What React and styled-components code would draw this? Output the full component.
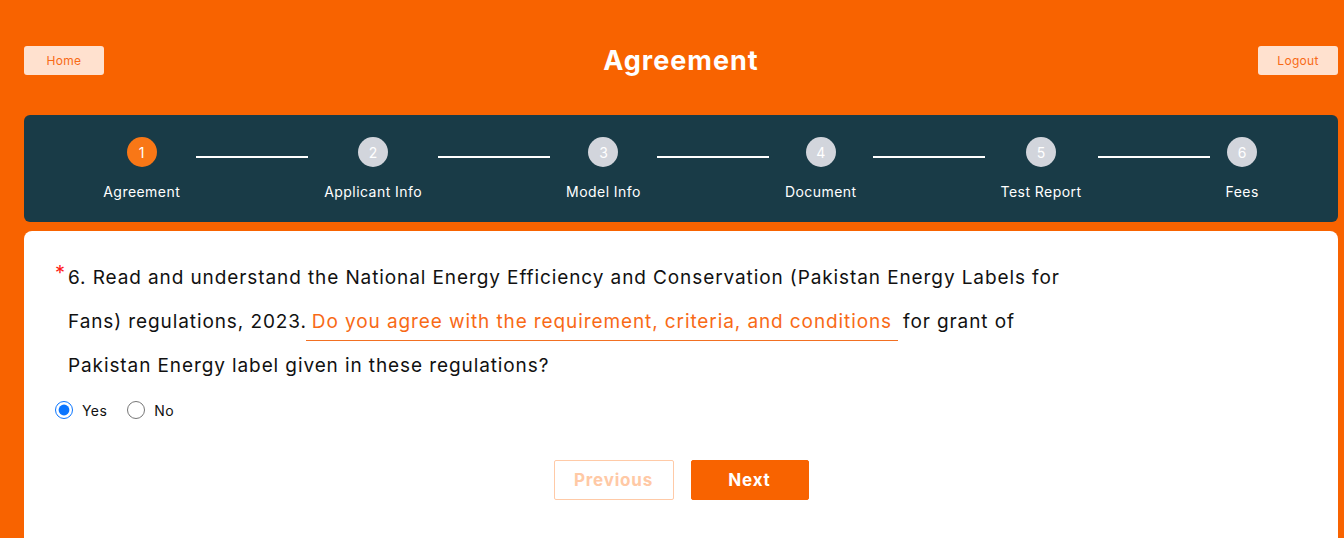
import React, { useState } from 'react';
import styled, { createGlobalStyle } from 'styled-components';

const GlobalStyle = createGlobalStyle`
  body {
    margin: 0;
    background: #f86300;
    font-family: Inter, "Open Sans", Arial, sans-serif;
  }
  * {
    box-sizing: border-box;
  }
`;

const Page = styled.div`
  padding: 0 6px 0 24px;
`;

const Header = styled.div`
  display: flex;
  align-items: center;
  justify-content: space-between;
  height: 115px;
  padding-top: 6px;
`;

const HeaderButton = styled.button`
  width: 80px;
  height: 29px;
  border: none;
  border-radius: 3px;
  background: #ffe1cf;
  color: #f86a16;
  font-family: inherit;
  font-size: 12px;
  letter-spacing: 0.3px;
  cursor: pointer;
`;

const Title = styled.h1`
  margin: 0;
  color: #ffffff;
  font-size: 27px;
  font-weight: 700;
  letter-spacing: 1px;
`;

const Stepper = styled.div`
  display: flex;
  justify-content: center;
  height: 107px;
  padding-top: 22px;
  border-radius: 6px;
  background: #193b47;
`;

const Step = styled.div`
  display: flex;
  flex-direction: column;
  align-items: center;
`;

const Circle = styled.div`
  display: flex;
  align-items: center;
  justify-content: center;
  width: 30px;
  height: 30px;
  border-radius: 50%;
  background: ${p => (p.$active ? '#f97716' : '#d2d5dc')};
  color: #ffffff;
  font-size: 14px;
`;

const StepLabel = styled.div`
  margin-top: 15px;
  color: #ffffff;
  font-size: 14px;
  line-height: 20px;
  letter-spacing: 0.45px;
  white-space: nowrap;
`;

const Connector = styled.div`
  width: 112px;
  height: 2px;
  margin: 19px 16px 0;
  background: #ffffff;
`;

const Card = styled.div`
  margin-top: 9px;
  min-height: 320px;
  padding: 25px 31px 40px;
  border-radius: 8px;
  background: #ffffff;
`;

const Question = styled.div`
  display: flex;
  color: #111111;
  font-size: 19px;
  line-height: 44px;
  letter-spacing: 0.9px;
`;

const Required = styled.span`
  width: 13px;
  color: #ff1a1a;
  font-size: 20px;
  line-height: 34px;
  letter-spacing: 0;
`;

const Highlight = styled.span`
  display: inline-block;
  margin: 0 5px 0 -1px;
  padding: 0 6px 3px;
  line-height: 30px;
  border-bottom: 1px solid #f27022;
  color: #f86a16;
`;

const RadioRow = styled.div`
  display: flex;
  align-items: center;
  gap: 20px;
  margin-top: 13px;
`;

const RadioLabel = styled.label`
  display: flex;
  align-items: center;
  gap: 9px;
  color: #111111;
  font-size: 14px;
  letter-spacing: 0.4px;
  cursor: pointer;
`;

const Radio = styled.input`
  width: 18px;
  height: 18px;
  margin: 0;
  accent-color: #0a75ff;
`;

const Actions = styled.div`
  display: flex;
  justify-content: center;
  gap: 17px;
  margin-top: 41px;
`;

const NavButton = styled.button`
  width: ${p => p.$width}px;
  height: 40px;
  border: 1px solid ${p => (p.$primary ? '#f86300' : '#ffcaa7')};
  border-radius: 2px;
  background: ${p => (p.$primary ? '#f86300' : '#ffffff')};
  color: ${p => (p.$primary ? '#ffffff' : '#ffc9a5')};
  font-family: inherit;
  font-size: 17px;
  font-weight: 700;
  letter-spacing: 0.8px;
  cursor: pointer;
`;

const steps = ['Agreement', 'Applicant Info', 'Model Info', 'Document', 'Test Report', 'Fees'];

export default function App() {
  const [answer, setAnswer] = useState('yes');

  return (
    <Page>
      <GlobalStyle />
      <Header>
        <HeaderButton>Home</HeaderButton>
        <Title>Agreement</Title>
        <HeaderButton>Logout</HeaderButton>
      </Header>

      <Stepper>
        {steps.map((label, i) => (
          <React.Fragment key={label}>
            {i > 0 && <Connector />}
            <Step>
              <Circle $active={i === 0}>{i + 1}</Circle>
              <StepLabel>{label}</StepLabel>
            </Step>
          </React.Fragment>
        ))}
      </Stepper>

      <Card>
        <Question>
          <Required>*</Required>
          <div>
            6. Read and understand the National Energy Efficiency and Conservation (Pakistan Energy Labels for
            <br />
            Fans) regulations, 2023.
            <Highlight>Do you agree with the requirement, criteria, and conditions</Highlight>
            for grant of
            <br />
            Pakistan Energy label given in these regulations?
          </div>
        </Question>

        <RadioRow>
          <RadioLabel>
            <Radio type="radio" name="agree" checked={answer === 'yes'} onChange={() => setAnswer('yes')} />
            Yes
          </RadioLabel>
          <RadioLabel>
            <Radio type="radio" name="agree" checked={answer === 'no'} onChange={() => setAnswer('no')} />
            No
          </RadioLabel>
        </RadioRow>

        <Actions>
          <NavButton $width={120}>Previous</NavButton>
          <NavButton $width={118} $primary>Next</NavButton>
        </Actions>
      </Card>
    </Page>
  );
}
